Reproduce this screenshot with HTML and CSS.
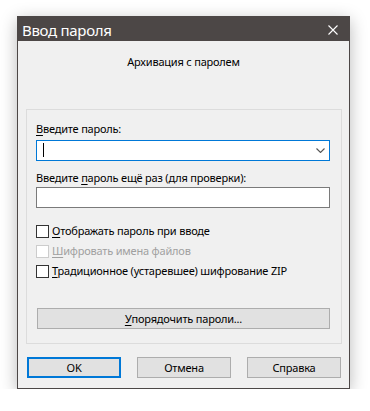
FILE: index.html
```html
<!DOCTYPE html>
<html lang="ru">
<head>
  <meta charset="UTF-8" />
  <title>Ввод пароля</title>
  <link rel="stylesheet" href="styles.css">
</head>
<body>

<div class="window">
  <div class="titlebar">
    <span class="title">Ввод пароля</span>
    <svg class="close" width="10" height="10" viewBox="0 0 10 10">
      <path d="M0.5 0.5 L9.5 9.5 M9.5 0.5 L0.5 9.5" stroke="#fff" stroke-width="1.1" fill="none"/>
    </svg>
  </div>

  <div class="content">
    <div class="heading">Архивация с паролем</div>

    <!-- Password group -->
    <div class="group">
      <div class="label"><u>В</u>ведите пароль:</div>
      <div class="combo">
        <span class="caret"></span>
        <svg class="chevron" width="9" height="5" viewBox="0 0 9 5">
          <path d="M0.5 0.5 L4.5 4.5 L8.5 0.5" stroke="#555" stroke-width="1.1" fill="none"/>
        </svg>
      </div>
      <div class="label label-second">Введите <u>п</u>ароль ещё раз (для проверки):</div>
      <div class="textbox"></div>

      <div class="checks">
        <div class="check"><span class="box"></span><span><u>О</u>тображать пароль при вводе</span></div>
        <div class="check disabled"><span class="box"></span><span><u>Ш</u>ифровать имена файлов</span></div>
        <div class="check"><span class="box"></span><span><u>Т</u>радиционное (устаревшее) шифрование ZIP</span></div>
      </div>

      <div class="btn btn-wide"><u>У</u>порядочить пароли...</div>
    </div>

    <div class="buttons">
      <div class="btn btn-default">OK</div>
      <div class="btn">Отмена</div>
      <div class="btn">Справка</div>
    </div>
  </div>
</div>

</body>
</html>
```

FILE: styles.css
```css
/* Basic reset */
* { margin: 0; padding: 0; box-sizing: border-box; }
body { background: #fff; font-family: "Noto Sans", "Open Sans", sans-serif; font-size: 11px; letter-spacing: -0.2px; line-height: 16px; color: #000; }
u { text-decoration: underline; text-underline-offset: 2px; }

/* Window frame */
.window { margin: 16px 0 0 17px; width: 333px; height: 373px; border: 1px solid #4c4746; background: #f0f0f0; box-shadow: 0 4px 16px rgba(0,0,0,0.28); }
.titlebar { height: 24px; background: #4c4746; display: flex; align-items: center; justify-content: space-between; padding: 0 11px 0 4px; }
.title { color: #fff; font-size: 15px; letter-spacing: -0.3px; line-height: 20px; margin-top: 1px; }
.close { display: block; margin-top: 2px; }

.content { padding: 13px 0 10px 8px; }
.heading { text-align: center; padding-right: 8px; }

/* Group box */
.group { margin-top: 39px; width: 316px; height: 235px; border: 1px solid #dcdcdc; padding: 11px 0 0 9px; }
.label-second { margin-top: 9px; }
.combo { position: relative; margin-top: 3px; width: 294px; height: 21px; background: #fff; border: 1px solid #0078d7; }
.caret { position: absolute; left: 6px; top: 2px; width: 1px; height: 14px; background: #000; }
.chevron { position: absolute; right: 4px; top: 7px; }
.textbox { margin-top: 1px; width: 294px; height: 21px; background: #fff; border: 1px solid #7a7a7a; }

/* Checkboxes */
.checks { margin-top: 13px; }
.check { display: flex; align-items: center; height: 20px; gap: 3px; }
.check .box { width: 13px; height: 13px; border: 1px solid #333; background: #fff; }
.check.disabled { color: #a0a0a0; }
.check.disabled .box { border-color: #cccccc; }

/* Buttons */
.btn { height: 21px; background: #e1e1e1; border: 1px solid #adadad; display: flex; align-items: center; justify-content: center; }
.btn-wide { margin: 27px 0 0 1px; width: 293px; }
.buttons { display: flex; gap: 16px; margin: 13px 0 0 1px; }
.buttons .btn { width: 94px; }
.btn-default { border: 2px solid #0078d7; }
```
